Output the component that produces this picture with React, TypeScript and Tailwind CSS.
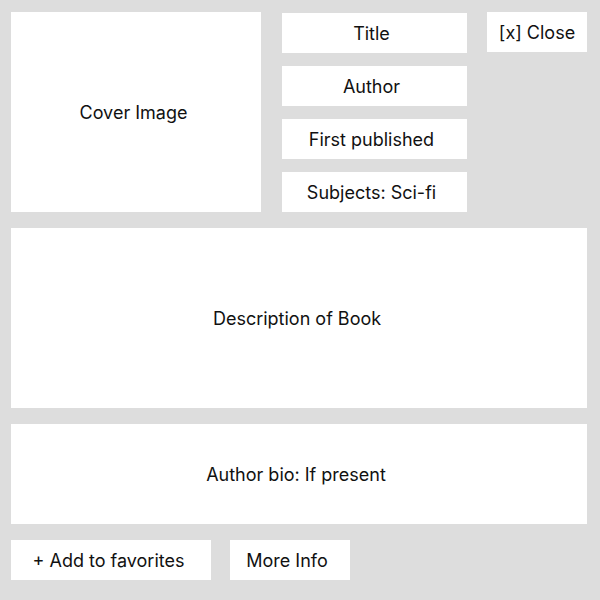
import React from "react";

const Box = ({
  className = "",
  children,
}: {
  className?: string;
  children: React.ReactNode;
}) => (
  <div
    className={`flex items-center justify-center bg-white text-[18px] text-[#111111] ${className}`}
  >
    {children}
  </div>
);

const App = () => {
  const details = ["Title", "Author", "First published", "Subjects: Sci-fi"];

  return (
    <div
      className="w-[600px] h-[600px] bg-[#dddddd] pl-[11px] pt-[12px] flex flex-col gap-4"
      style={{ fontFamily: "Inter, 'Noto Sans', sans-serif" }}
    >
      <div className="flex items-start">
        {/* Cover */}
        <Box className="w-[250px] h-[200px] pr-[5px]">Cover Image</Box>
        {/* Book details */}
        <div className="ml-[21px] pt-px flex flex-col gap-[13px]">
          {details.map((d) => (
            <Box key={d} className="w-[185px] h-[40px] pr-[6px]">
              {d}
            </Box>
          ))}
        </div>
        <Box className="ml-[20px] w-[100px] h-[40px]">[x] Close</Box>
      </div>
      <Box className="w-[576px] h-[180px] pr-[4px]">Description of Book</Box>
      <Box className="w-[576px] h-[100px] pr-[6px]">Author bio: If present</Box>
      <div className="flex gap-[19px]">
        <Box className="w-[200px] h-[40px] pr-[5px]">+ Add to favorites</Box>
        <Box className="w-[120px] h-[40px] pr-[6px]">More Info</Box>
      </div>
    </div>
  );
};

export default App;
